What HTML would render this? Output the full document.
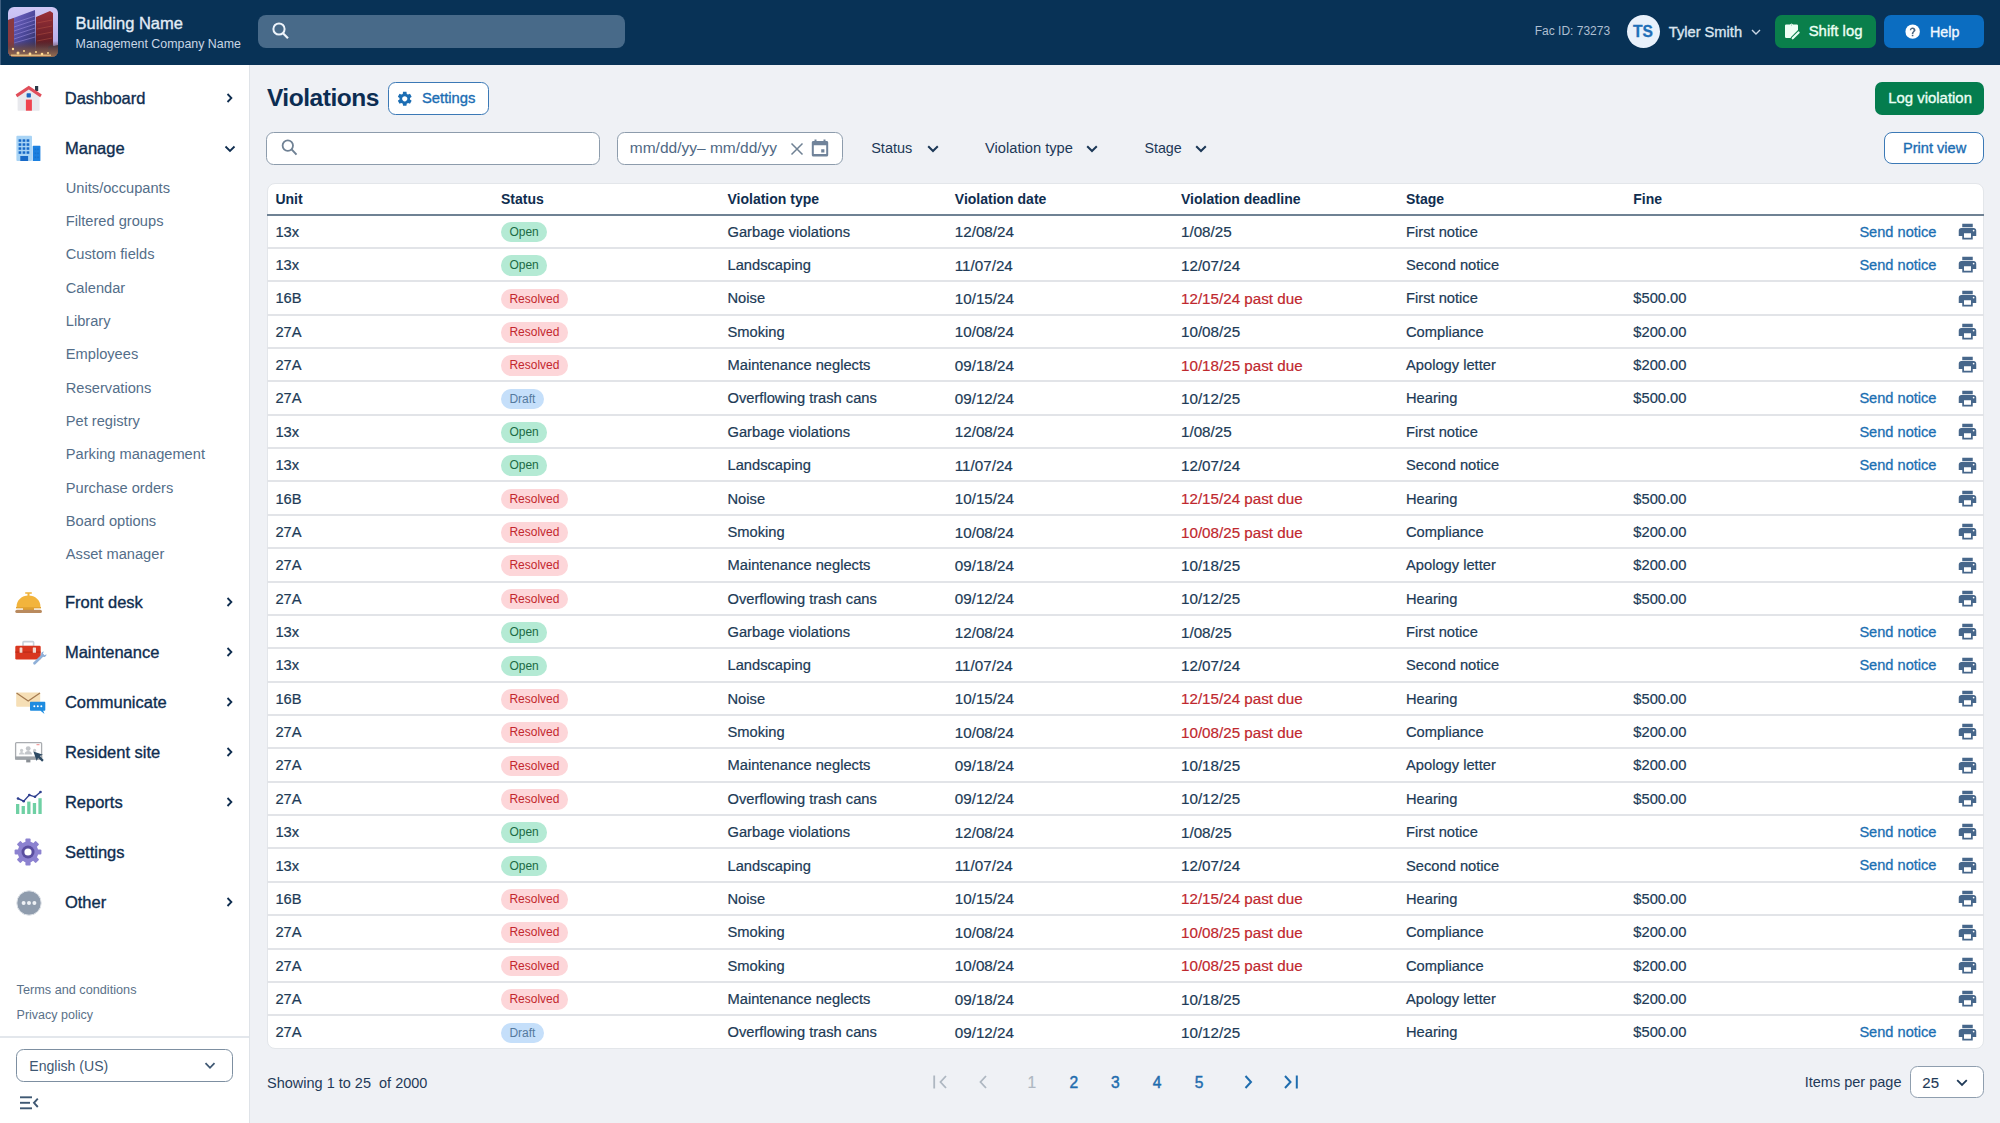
<!DOCTYPE html>
<html><head><meta charset="utf-8"><title>Violations</title>
<style>
*{box-sizing:border-box;margin:0;padding:0}
html,body{width:2000px;height:1123px;overflow:hidden}
body{background:#eff1f5;font-family:"Liberation Sans",sans-serif;position:relative;color:#1d3857}
.a{position:absolute;line-height:1;white-space:nowrap}
.med{-webkit-text-stroke:0.35px currentColor}
svg{position:absolute;display:block;overflow:visible}
#hdr{position:absolute;left:0;top:0;width:2000px;height:65px;background:#083256}
#hdr .edge{position:absolute;left:0;top:0;width:1px;height:65px;background:#3f5f80}
#logo{position:absolute;left:8px;top:7px;width:50px;height:50px;border-radius:6px;overflow:hidden}
#hsearch{position:absolute;left:258px;top:15px;width:367px;height:33px;border-radius:8px;background:#486a89}
.hbtn{position:absolute;top:15px;height:33px;border-radius:7px}
#side{position:absolute;left:0;top:65px;width:250px;height:1058px;background:#fff;border-right:1px solid #dfe3e8}
.nav{font-size:16.5px;color:#0f2d4f}
.sub{font-size:14.65px;color:#546e89}
.btn-out{position:absolute;background:#fff;border:1.5px solid #3b79b6;border-radius:7.5px}
.inp{position:absolute;background:#fff;border:1.4px solid #8d9cac;border-radius:7.5px}
#tbl{position:absolute;left:267px;top:182.5px;width:1716.5px;height:866px;background:#fff;border-radius:8px;border:1px solid #e3e6ea}
.th{font-size:14px;font-weight:700;color:#0f2d4f}
#hline{position:absolute;left:267px;top:213.6px;width:1716.5px;height:2px;background:#6f8294}
.row{position:absolute;left:267px;width:1716.5px;height:33.36px;border-bottom:2px solid #e2e4e8}
.row:last-child{border-bottom:none}
.row .c{position:absolute;top:9.1px;font-size:14.7px;-webkit-text-stroke:0.2px currentColor;line-height:1;white-space:nowrap;color:#203a56}
.c1{left:8.4px}.c3{left:460.5px}.c4{left:687.8px}.c5{left:914px}.c6{left:1139px}.c7{left:1366.3px}
.row .c4,.row .c5{font-size:15.2px;top:8.7px}
.row .red{color:#bf282e}
.badge{position:absolute;left:234px;top:6.3px;height:20.6px;border-radius:10.3px;font-size:12px;line-height:21.4px;padding:0 8.4px;white-space:nowrap}
.b-open{background:#b4ead4;color:#1c6a45}
.b-res{background:#fdd6d9;color:#c3272e}
.b-draft{background:#c5dffa;color:#557a9e}
.send{position:absolute;left:1592.4px;top:9.0px;font-size:14.6px;line-height:1;color:#1b6fb2;white-space:nowrap;-webkit-text-stroke:0.3px currentColor}
.pr{left:1689.9px;top:5.4px;width:21px;height:21px;fill:#47678b}
.pg{font-size:15.6px;font-weight:400;color:#1f6dae;-webkit-text-stroke:0.45px currentColor}
</style></head><body>

<!-- HEADER -->
<div id="hdr">
  <div class="edge"></div>
  <div id="logo">
    <svg width="50" height="50" viewBox="0 0 50 50" style="left:0;top:0">
      <defs>
        <linearGradient id="sky" x1="0" y1="0" x2="0" y2="1"><stop offset="0" stop-color="#cfc8f6"/><stop offset="1" stop-color="#b0a6e6"/></linearGradient>
        <linearGradient id="b1" x1="0" y1="0" x2="1" y2="1"><stop offset="0" stop-color="#7a6ad0"/><stop offset=".55" stop-color="#4a4798"/><stop offset="1" stop-color="#2a2a50"/></linearGradient>
        <linearGradient id="b2" x1="0" y1="0" x2="0" y2="1"><stop offset="0" stop-color="#9a3038"/><stop offset=".6" stop-color="#6a2028"/><stop offset="1" stop-color="#3a1a20"/></linearGradient>
        <linearGradient id="gl" x1="0" y1="0" x2="0" y2="1"><stop offset="0" stop-color="#5a3a40" stop-opacity="0"/><stop offset=".45" stop-color="#6a4a48" stop-opacity=".8"/><stop offset="1" stop-color="#9a7050"/></linearGradient>
      </defs>
      <rect width="50" height="50" fill="url(#sky)"/>
      <polygon points="0,13 27,3 28,50 0,50" fill="url(#b1)"/>
      <g stroke="#a898e8" stroke-width=".9" opacity=".55">
        <line x1="6" y1="16" x2="27" y2="9"/><line x1="6" y1="20" x2="27" y2="13"/><line x1="6" y1="24" x2="27" y2="17"/>
        <line x1="6" y1="28" x2="27" y2="21"/><line x1="6" y1="32" x2="27" y2="25"/><line x1="6" y1="36" x2="27" y2="30"/>
      </g>
      <polygon points="0,13 6,11 6,50 0,50" fill="#8a3a40"/>
      <polygon points="28,10 42,4 45,6 45,50 28,50" fill="url(#b2)"/>
      <g stroke="#c05a48" stroke-width=".7" opacity=".6">
        <line x1="29" y1="16" x2="44" y2="13"/><line x1="29" y1="22" x2="44" y2="19"/><line x1="29" y1="28" x2="44" y2="25"/><line x1="29" y1="34" x2="44" y2="31"/>
      </g>
      <path d="M40 50V40l3-2 3 1 4-1v12z" fill="#2a2a3a"/>
      <rect x="0" y="34" width="50" height="16" fill="url(#gl)"/>
      <g fill="#ffd890"><circle cx="5" cy="42" r="1.2"/><circle cx="10" cy="46" r="1.5"/><circle cx="16" cy="44" r="1"/><circle cx="22" cy="47" r="1.4"/><circle cx="28" cy="45" r="1"/><circle cx="34" cy="47" r="1.3"/><circle cx="40" cy="46" r="1"/><rect x="3" y="47.5" width="40" height="1.5" opacity=".7"/></g>
    </svg>
  </div>
  <div class="a med" style="left:75.6px;top:14.6px;font-size:16.5px;color:#e3ecf6">Building Name</div>
  <div class="a" style="left:75.6px;top:37.9px;font-size:12.4px;color:#c8d6e5">Management Company Name</div>
  <div id="hsearch"></div>
  <svg width="24" height="24" style="left:270px;top:19px" viewBox="0 0 24 24"><circle cx="9" cy="10" r="5.6" fill="none" stroke="#eef4fb" stroke-width="2"/><line x1="13" y1="14.2" x2="18" y2="19.2" stroke="#eef4fb" stroke-width="2.2"/></svg>

  <div class="a" style="left:1534.75px;top:25.4px;font-size:12px;color:#aebfd1">Fac ID: 73273</div>
  <div style="position:absolute;left:1627px;top:15px;width:33px;height:33px;border-radius:50%;background:#e9f1fb"></div>
  <div class="a" style="left:1633px;top:23.7px;font-size:15.6px;font-weight:700;color:#1f6fb8;-webkit-text-stroke:0.3px currentColor">TS</div>
  <div class="a med" style="left:1668.75px;top:24.5px;font-size:14.66px;color:#dbe5ef">Tyler Smith</div>
  <svg width="10" height="6" style="left:1750.5px;top:28.8px" viewBox="0 0 10 6"><polyline points="1,1 5,5 9,1" fill="none" stroke="#c9d6e4" stroke-width="1.4"/></svg>

  <div class="hbtn" style="left:1775px;width:101px;background:#0a7f4b"></div>
  <svg width="16" height="16" style="left:1784px;top:23px" viewBox="0 0 16 16">
    <path d="M1 2.6Q1 1.4 2.2 1.4H5.9L7.5 0.6 9.1 1.4H12.8Q14 1.4 14 2.6V7L6.8 14.2V15H2.2Q1 15 1 13.8Z" fill="#effff6"/>
    <path d="M7.2 1.6l.3 1.6.3-1.6z" fill="#0a7f4b"/>
    <path d="M8.7 15.3l5.9-5.8" stroke="#e6fff4" stroke-width="2.2" stroke-linecap="round"/>
  </svg>
  <div class="a med" style="left:1808.7px;top:24.1px;font-size:14.9px;color:#ecfff4">Shift log</div>

  <div class="hbtn" style="left:1884.3px;width:99.7px;background:#0b6dc1"></div>
  <svg width="17.3" height="17.3" style="left:1904.4px;top:22.9px" viewBox="0 0 24 24"><circle cx="12" cy="12" r="10" fill="#fff"/><g transform="translate(12 12.6) scale(.85) translate(-12 -12)"><path fill="#4a6580" d="M13.2 19h-2.6v-2.5h2.6zm2.07-7.75l-.9.92C13.65 12.9 13.2 13.5 13.2 15h-2.6v-.5c0-1.1.45-2.1 1.17-2.83l1.24-1.26c.37-.36.59-.86.59-1.41 0-1.1-.9-2-2-2s-2 .9-2 2H7.4c0-2.5 2.1-4.5 4.6-4.5s4.6 2 4.6 4.5c0 .88-.36 1.68-.93 2.25z"/></g></svg>
  <div class="a med" style="left:1930px;top:24.6px;font-size:14.3px;color:#f2f8ff">Help</div>
</div>

<!-- SIDEBAR -->
<div id="side"></div>
<!-- Dashboard icon: house -->
<svg width="28" height="28" style="left:15px;top:84px" viewBox="0 0 28 28">
  <rect x="20" y="2" width="3.2" height="5" fill="#2b3a48"/>
  <path d="M2.6 12L13.8 4.6 24.6 12v14.1c0 .4-.3.6-.6.6H3.2c-.4 0-.6-.2-.6-.6z" fill="#e8e9ed"/>
  <path d="M.6 10.6L13.8 1.8l13 8.8-1.6 2.6L13.8 5.6 2.2 13.2z" fill="#e04e5a"/>
  <rect x="11.6" y="9.2" width="4.3" height="4.2" rx=".7" fill="#1a66c0"/>
  <rect x="10.9" y="15.6" width="6" height="11.1" fill="#f0444f"/>
</svg>
<div class="a nav med" style="left:64.75px;top:89.5px">Dashboard</div>
<svg width="8" height="10" style="left:226.2px;top:93.2px" viewBox="0 0 8 10"><polyline points="1.5,1 5.4,5 1.5,9" fill="none" stroke="#0f2d4f" stroke-width="1.8"/></svg>

<!-- Manage icon: building -->
<svg width="28" height="28" style="left:15px;top:134px" viewBox="0 0 28 28">
  <rect x="1.4" y="1.7" width="15.6" height="25.3" rx="1" fill="#a9d4f5"/>
  <g fill="#1769c7"><rect x="3.6" y="5.3" width="2.7" height="2.5"/><rect x="7.6" y="5.3" width="2.7" height="2.5"/><rect x="11.6" y="5.3" width="2.7" height="2.5"/><rect x="3.6" y="9.3" width="2.7" height="2.5"/><rect x="7.6" y="9.3" width="2.7" height="2.5"/><rect x="11.6" y="9.3" width="2.7" height="2.5"/><rect x="3.6" y="13.3" width="2.7" height="2.5"/><rect x="7.6" y="13.3" width="2.7" height="2.5"/><rect x="11.6" y="13.3" width="2.7" height="2.5"/><rect x="3.6" y="17.3" width="2.7" height="2.5"/><rect x="7.6" y="17.3" width="2.7" height="2.5"/><rect x="11.6" y="17.3" width="2.7" height="2.5"/><rect x="5.3" y="22" width="7.8" height="5"/></g>
  <rect x="17.7" y="11.8" width="7.7" height="15.2" rx=".6" fill="#1b80e0"/><g fill="#1466c0" opacity=".5"><rect x="19.6" y="14.5" width="1.6" height="1.6"/><rect x="22.2" y="14.5" width="1.6" height="1.6"/><rect x="19.6" y="18.5" width="1.6" height="1.6"/><rect x="22.2" y="18.5" width="1.6" height="1.6"/><rect x="19.6" y="22.5" width="1.6" height="1.6"/><rect x="22.2" y="22.5" width="1.6" height="1.6"/></g>
</svg>
<div class="a nav med" style="left:65px;top:139.5px">Manage</div>
<svg width="12" height="8" style="left:224px;top:144.5px" viewBox="0 0 12 8"><polyline points="1.5,1.5 6,6 10.5,1.5" fill="none" stroke="#0f2d4f" stroke-width="1.8"/></svg>

<div class="a sub" style="left:65.8px;top:180.60px">Units/occupants</div>
<div class="a sub" style="left:65.8px;top:213.95px">Filtered groups</div>
<div class="a sub" style="left:65.8px;top:247.30px">Custom fields</div>
<div class="a sub" style="left:65.8px;top:280.65px">Calendar</div>
<div class="a sub" style="left:65.8px;top:314.00px">Library</div>
<div class="a sub" style="left:65.8px;top:347.35px">Employees</div>
<div class="a sub" style="left:65.8px;top:380.70px">Reservations</div>
<div class="a sub" style="left:65.8px;top:414.05px">Pet registry</div>
<div class="a sub" style="left:65.8px;top:447.40px">Parking management</div>
<div class="a sub" style="left:65.8px;top:480.75px">Purchase orders</div>
<div class="a sub" style="left:65.8px;top:514.10px">Board options</div>
<div class="a sub" style="left:65.8px;top:547.45px">Asset manager</div>

<!-- Front desk: bell -->
<svg width="28" height="24" style="left:15px;top:590px" viewBox="0 0 28 24">
  <rect x="10" y="2.2" width="7" height="1.6" rx=".8" fill="#f0b23a"/>
  <rect x="12.5" y="3" width="2" height="3" fill="#f0b23a"/>
  <path d="M1.5 17.2c0-7 5.3-11.6 12-11.6s12 4.6 12 11.6z" fill="#f2b43c"/>
  <rect x="1" y="17" width="25" height="1.4" fill="#e3a432"/>
  <rect x="8" y="18" width="11" height="2" fill="#e0a030"/>
  <rect x="0.3" y="19.8" width="26.6" height="3.2" rx="1.6" fill="#b98a5e"/>
</svg>
<div class="a nav med" style="left:64.9px;top:593.6px">Front desk</div>
<svg width="8" height="10" style="left:226.2px;top:597.4px" viewBox="0 0 8 10"><polyline points="1.5,1 5.4,5 1.5,9" fill="none" stroke="#0f2d4f" stroke-width="1.8"/></svg>

<!-- Maintenance: toolbox -->
<svg width="34" height="26" style="left:14px;top:640px" viewBox="0 0 34 26">
  <rect x="9" y="1.6" width="10.6" height="5" rx=".8" fill="none" stroke="#c8d0da" stroke-width="1.6"/>
  <rect x="1.3" y="5.8" width="25.4" height="13.6" rx="1.2" fill="#d9361f"/>
  <rect x="1.3" y="11.6" width="25.4" height="1" fill="#b82a18"/>
  <rect x="5.6" y="7.6" width="2.8" height="5.2" rx=".4" fill="#f3d9d0"/>
  <rect x="18.8" y="7.6" width="3.2" height="5.2" rx=".4" fill="#f3d9d0"/>
  <path d="M20.5 23.3l8-7.8" stroke="#8fb0d8" stroke-width="2.6" stroke-linecap="round"/>
  <path d="M27 14.5c0-1.6 1.3-2.9 2.9-2.9l-1 2 1.6 1.6 2-1c0 1.6-1.3 2.9-2.9 2.9z" fill="#8fb0d8"/>
</svg>
<div class="a nav med" style="left:64.9px;top:643.7px">Maintenance</div>
<svg width="8" height="10" style="left:226.2px;top:647.4px" viewBox="0 0 8 10"><polyline points="1.5,1 5.4,5 1.5,9" fill="none" stroke="#0f2d4f" stroke-width="1.8"/></svg>

<!-- Communicate: envelope + chat -->
<svg width="32" height="26" style="left:15px;top:690px" viewBox="0 0 32 26">
  <rect x="1.2" y="2.5" width="24" height="14.2" rx="1" fill="#f6dfb6"/>
  <polyline points="1.5,3 13.2,11 25,3" fill="none" stroke="#a47a50" stroke-width="1.3"/>
  <path d="M16 11.8h13.3c.6 0 1 .4 1 1v6.9c0 .6-.4 1-1 1h-1.2l1.4 3.2-4-3.2H16c-.6 0-1-.4-1-1v-6.9c0-.6.4-1 1-1z" fill="#1e8ce0"/>
  <circle cx="19.3" cy="16.3" r="1" fill="#fff"/><circle cx="22.8" cy="16.3" r="1" fill="#fff"/><circle cx="26.3" cy="16.3" r="1" fill="#fff"/>
</svg>
<div class="a nav med" style="left:64.9px;top:693.6px">Communicate</div>
<svg width="8" height="10" style="left:226.2px;top:697.4px" viewBox="0 0 8 10"><polyline points="1.5,1 5.4,5 1.5,9" fill="none" stroke="#0f2d4f" stroke-width="1.8"/></svg>

<!-- Resident site: monitor -->
<svg width="32" height="24" style="left:14px;top:741px" viewBox="0 0 32 24">
  <rect x="1.6" y="1.6" width="26" height="16.4" rx="1" fill="#fff" stroke="#a9acb0" stroke-width="1.3"/>
  <rect x="1" y="15.4" width="27.2" height="3.2" fill="#9ea3a8"/>
  <rect x="12.2" y="18.4" width="4.2" height="3" fill="#8a8f95"/>
  <circle cx="14.2" cy="7.6" r="2.4" fill="#c2c5c9"/><path d="M10.4 13.6c0-2.4 1.6-3.6 3.8-3.6s3.8 1.2 3.8 3.6z" fill="#c2c5c9"/>
  <circle cx="7.6" cy="9.4" r="1.6" fill="#c9cccf"/><path d="M5 13.6c0-1.6 1.1-2.6 2.6-2.6s2.6 1 2.6 2.6z" fill="#c9cccf"/>
  <circle cx="20.6" cy="9.4" r="1.6" fill="#c9cccf"/>
  <rect x="22.5" y="3.2" width="3" height="1" fill="#e88"/>
  <path d="M19.4 10.6l9.6 3.2-3.3 1.3 4 4-1.6 1.6-4-4-1.4 3.4z" fill="#2d4a63"/>
</svg>
<div class="a nav med" style="left:64.9px;top:743.6px">Resident site</div>
<svg width="8" height="10" style="left:226.2px;top:747.4px" viewBox="0 0 8 10"><polyline points="1.5,1 5.4,5 1.5,9" fill="none" stroke="#0f2d4f" stroke-width="1.8"/></svg>

<!-- Reports: chart -->
<svg width="30" height="26" style="left:14px;top:790px" viewBox="0 0 30 26">
  <g fill="#6fd0a4">
   <rect x="2" y="14" width="3.3" height="10"/><rect x="7.6" y="16" width="3.3" height="8"/>
   <rect x="13.2" y="11.6" width="3.3" height="12.4"/><rect x="18.8" y="13" width="3.3" height="11"/>
   <rect x="24.4" y="8.2" width="3.3" height="15.8"/>
  </g>
  <polyline points="4,8.5 9.7,11.2 15.3,5 21,6.8 26.5,2" fill="none" stroke="#2e3f8f" stroke-width="1.4"/>
  <g fill="#2e3f8f"><circle cx="4" cy="8.5" r="1.3"/><circle cx="9.7" cy="11.2" r="1.3"/><circle cx="15.3" cy="5" r="1.3"/><circle cx="21" cy="6.8" r="1.3"/><circle cx="26.5" cy="2" r="1.3"/></g>
</svg>
<div class="a nav med" style="left:64.9px;top:793.6px">Reports</div>
<svg width="8" height="10" style="left:226.2px;top:797.4px" viewBox="0 0 8 10"><polyline points="1.5,1 5.4,5 1.5,9" fill="none" stroke="#0f2d4f" stroke-width="1.8"/></svg>

<!-- Settings: gear -->
<svg width="28" height="28" style="left:14.1px;top:838px" viewBox="0 0 28 28">
  <g fill="#8c82d0"><rect x="11.4" y="0.6" width="5.2" height="6" rx="1" transform="rotate(0 14 14)"/><rect x="11.4" y="0.6" width="5.2" height="6" rx="1" transform="rotate(45 14 14)"/><rect x="11.4" y="0.6" width="5.2" height="6" rx="1" transform="rotate(90 14 14)"/><rect x="11.4" y="0.6" width="5.2" height="6" rx="1" transform="rotate(135 14 14)"/><rect x="11.4" y="0.6" width="5.2" height="6" rx="1" transform="rotate(180 14 14)"/><rect x="11.4" y="0.6" width="5.2" height="6" rx="1" transform="rotate(225 14 14)"/><rect x="11.4" y="0.6" width="5.2" height="6" rx="1" transform="rotate(270 14 14)"/><rect x="11.4" y="0.6" width="5.2" height="6" rx="1" transform="rotate(315 14 14)"/><circle cx="14" cy="14" r="10.4"/></g>
  <circle cx="14" cy="14" r="6.5" fill="#5a4fa0"/>
  <circle cx="14" cy="14" r="3.6" fill="#fff"/>
</svg>
<div class="a nav med" style="left:64.9px;top:843.6px">Settings</div>

<!-- Other -->
<svg width="26" height="26" style="left:16px;top:889.5px" viewBox="0 0 26 26">
  <circle cx="13" cy="13" r="12.2" fill="#8f9cad" stroke="#dfe3e8" stroke-width="1"/>
  <circle cx="7.6" cy="13" r="2" fill="#eef1f5"/><circle cx="13" cy="13" r="2" fill="#eef1f5"/><circle cx="18.4" cy="13" r="2" fill="#eef1f5"/>
</svg>
<div class="a nav med" style="left:64.9px;top:893.6px">Other</div>
<svg width="8" height="10" style="left:226.2px;top:897.4px" viewBox="0 0 8 10"><polyline points="1.5,1 5.4,5 1.5,9" fill="none" stroke="#0f2d4f" stroke-width="1.8"/></svg>

<div class="a" style="left:16.6px;top:984.1px;font-size:12.7px;color:#5a7189">Terms and conditions</div>
<div class="a" style="left:16.6px;top:1009px;font-size:12.5px;color:#5a7189">Privacy policy</div>
<div style="position:absolute;left:0;top:1036px;width:249px;height:1.6px;background:#e3e7ec"></div>
<div class="inp" style="left:16.3px;top:1049px;width:216.4px;height:33px;border-color:#7d8fa1;border-width:1.3px"></div>
<div class="a" style="left:29.3px;top:1058.9px;font-size:14.07px;color:#3f5873">English (US)</div>
<svg width="12" height="8" style="left:204px;top:1061.8px" viewBox="0 0 12 8"><polyline points="1.5,1.2 6,5.8 10.5,1.2" fill="none" stroke="#3f5873" stroke-width="1.8"/></svg>
<svg width="20" height="14" style="left:18.5px;top:1096px" viewBox="0 0 20 14">
  <g stroke="#3f5873" stroke-width="1.9" fill="none"><line x1="1" y1="1.3" x2="13" y2="1.3"/><line x1="1" y1="6.8" x2="11" y2="6.8"/><line x1="1" y1="12.3" x2="13" y2="12.3"/><polyline points="18.8,2.6 15,6.8 18.8,11"/></g>
</svg>


<!-- MAIN -->
<div class="a" style="left:266.9px;top:85.76px;font-size:24.5px;letter-spacing:-0.45px;font-weight:700;color:#0c2d52">Violations</div>
<div class="btn-out" style="left:388px;top:82px;width:100.5px;height:32.5px"></div>
<svg width="17.5" height="17.5" style="left:396.3px;top:89.5px" viewBox="0 0 24 24"><path fill="#1b6db3" d="M19.14 12.94c.04-.3.06-.61.06-.94 0-.32-.02-.64-.07-.94l2.03-1.58c.18-.14.23-.41.12-.61l-1.92-3.32c-.12-.22-.37-.29-.59-.22l-2.39.96c-.5-.38-1.03-.7-1.62-.94l-.36-2.54c-.04-.24-.24-.41-.48-.41h-3.84c-.24 0-.43.17-.47.41l-.36 2.54c-.59.24-1.13.57-1.62.94l-2.39-.96c-.22-.08-.47 0-.59.22L2.74 8.87c-.12.21-.08.47.12.61l2.03 1.58c-.05.3-.09.63-.09.94s.02.64.07.94l-2.03 1.58c-.18.14-.23.41-.12.61l1.92 3.32c.12.22.37.29.59.22l2.39-.96c.5.38 1.03.7 1.62.94l.36 2.54c.05.24.24.41.48.41h3.84c.24 0 .44-.17.47-.41l.36-2.54c.59-.24 1.13-.56 1.62-.94l2.39.96c.22.08.47 0 .59-.22l1.92-3.32c.12-.22.07-.47-.12-.61l-2.01-1.58zM12 15.6c-1.98 0-3.6-1.62-3.6-3.6s1.62-3.6 3.6-3.6 3.6 1.62 3.6 3.6-1.62 3.6-3.6 3.6z"/></svg>
<div class="a med" style="left:422px;top:91px;font-size:14.8px;color:#1b6db3">Settings</div>

<div style="position:absolute;left:1875px;top:81.7px;width:109.2px;height:33.1px;border-radius:7px;background:#047d4e"></div>
<div class="a med" style="left:1888.3px;top:91px;font-size:14.9px;color:#eafff4">Log violation</div>

<div class="inp" style="left:266.3px;top:132px;width:333.4px;height:32.5px"></div>
<svg width="20" height="20" style="left:279px;top:137px" viewBox="0 0 20 20"><circle cx="8.8" cy="8.6" r="5.2" fill="none" stroke="#6f8194" stroke-width="1.8"/><line x1="12.6" y1="12.4" x2="17.5" y2="17.6" stroke="#6f8194" stroke-width="2"/></svg>

<div class="inp" style="left:617px;top:131.8px;width:225.8px;height:32.8px"></div>
<div class="a" style="left:629.8px;top:140.23px;font-size:15.5px;color:#4f6884">mm/dd/yy– mm/dd/yy</div>
<svg width="14" height="14" style="left:790px;top:141.5px" viewBox="0 0 14 14"><path d="M1.5 1.5L12.5 12.5M12.5 1.5L1.5 12.5" stroke="#6f8194" stroke-width="1.5"/></svg>
<svg width="18" height="18" style="left:811px;top:139px" viewBox="0 0 18 18"><path fill="#70839a" d="M3.5 0.5h2v1.6h7V0.5h2v1.6h1.2c.8 0 1.5.7 1.5 1.5v12.3c0 .8-.7 1.5-1.5 1.5H2.3c-.8 0-1.5-.7-1.5-1.5V3.6c0-.8.7-1.5 1.5-1.5h1.2zM2.8 6.2v8.8h12.4V6.2zM10.2 10.2h3.2v3.2h-3.2z"/></svg>

<div class="a" style="left:871.2px;top:141.1px;font-size:14.5px;color:#1c3857">Status</div>
<svg width="12" height="8" style="left:927px;top:145px" viewBox="0 0 12 8"><polyline points="1.2,1.2 6,6 10.8,1.2" fill="none" stroke="#1c3857" stroke-width="2"/></svg>
<div class="a" style="left:985px;top:141.1px;font-size:14.7px;color:#1c3857">Violation type</div>
<svg width="12" height="8" style="left:1086px;top:145px" viewBox="0 0 12 8"><polyline points="1.2,1.2 6,6 10.8,1.2" fill="none" stroke="#1c3857" stroke-width="2"/></svg>
<div class="a" style="left:1144.4px;top:141.1px;font-size:14.3px;color:#1c3857">Stage</div>
<svg width="12" height="8" style="left:1194.5px;top:145px" viewBox="0 0 12 8"><polyline points="1.2,1.2 6,6 10.8,1.2" fill="none" stroke="#1c3857" stroke-width="2"/></svg>

<div class="btn-out" style="left:1884.2px;top:131.8px;width:100px;height:32.7px;border-radius:8px"></div>
<div class="a med" style="left:1903px;top:141px;font-size:14.6px;color:#1b6db3">Print view</div>

<!-- TABLE -->
<div id="tbl"></div>
<div class="a th" style="left:275.4px;top:192.1px">Unit</div>
<div class="a th" style="left:501px;top:192.1px">Status</div>
<div class="a th" style="left:727.5px;top:192.1px">Violation type</div>
<div class="a th" style="left:954.8px;top:192.1px">Violation date</div>
<div class="a th" style="left:1181px;top:192.1px">Violation deadline</div>
<div class="a th" style="left:1406px;top:192.1px">Stage</div>
<div class="a th" style="left:1633.3px;top:192.1px">Fine</div>
<div id="hline"></div>
<div id="rows">
<div class="row" style="top:215.60px"><span class="c c1">13x</span><span class="badge b-open">Open</span><span class="c c3">Garbage violations</span><span class="c c4">12/08/24</span><span class="c c5">1/08/25</span><span class="c c6">First notice</span><span class="c c7"></span><span class="send">Send notice</span><svg class="pr" viewBox="0 0 24 24"><path d="M19 8H5c-1.66 0-3 1.34-3 3v6h4v4h12v-4h4v-6c0-1.66-1.34-3-3-3zm-3 11H8v-5h8v5zm3-7c-.55 0-1-.45-1-1s.45-1 1-1 1 .45 1 1-.45 1-1 1zm-1-9H6v4h12V3z"/></svg></div>
<div class="row" style="top:248.96px"><span class="c c1">13x</span><span class="badge b-open">Open</span><span class="c c3">Landscaping</span><span class="c c4">11/07/24</span><span class="c c5">12/07/24</span><span class="c c6">Second notice</span><span class="c c7"></span><span class="send">Send notice</span><svg class="pr" viewBox="0 0 24 24"><path d="M19 8H5c-1.66 0-3 1.34-3 3v6h4v4h12v-4h4v-6c0-1.66-1.34-3-3-3zm-3 11H8v-5h8v5zm3-7c-.55 0-1-.45-1-1s.45-1 1-1 1 .45 1 1-.45 1-1 1zm-1-9H6v4h12V3z"/></svg></div>
<div class="row" style="top:282.32px"><span class="c c1">16B</span><span class="badge b-res">Resolved</span><span class="c c3">Noise</span><span class="c c4">10/15/24</span><span class="c c5 red">12/15/24 past due</span><span class="c c6">First notice</span><span class="c c7">$500.00</span><svg class="pr" viewBox="0 0 24 24"><path d="M19 8H5c-1.66 0-3 1.34-3 3v6h4v4h12v-4h4v-6c0-1.66-1.34-3-3-3zm-3 11H8v-5h8v5zm3-7c-.55 0-1-.45-1-1s.45-1 1-1 1 .45 1 1-.45 1-1 1zm-1-9H6v4h12V3z"/></svg></div>
<div class="row" style="top:315.68px"><span class="c c1">27A</span><span class="badge b-res">Resolved</span><span class="c c3">Smoking</span><span class="c c4">10/08/24</span><span class="c c5">10/08/25</span><span class="c c6">Compliance</span><span class="c c7">$200.00</span><svg class="pr" viewBox="0 0 24 24"><path d="M19 8H5c-1.66 0-3 1.34-3 3v6h4v4h12v-4h4v-6c0-1.66-1.34-3-3-3zm-3 11H8v-5h8v5zm3-7c-.55 0-1-.45-1-1s.45-1 1-1 1 .45 1 1-.45 1-1 1zm-1-9H6v4h12V3z"/></svg></div>
<div class="row" style="top:349.04px"><span class="c c1">27A</span><span class="badge b-res">Resolved</span><span class="c c3">Maintenance neglects</span><span class="c c4">09/18/24</span><span class="c c5 red">10/18/25 past due</span><span class="c c6">Apology letter</span><span class="c c7">$200.00</span><svg class="pr" viewBox="0 0 24 24"><path d="M19 8H5c-1.66 0-3 1.34-3 3v6h4v4h12v-4h4v-6c0-1.66-1.34-3-3-3zm-3 11H8v-5h8v5zm3-7c-.55 0-1-.45-1-1s.45-1 1-1 1 .45 1 1-.45 1-1 1zm-1-9H6v4h12V3z"/></svg></div>
<div class="row" style="top:382.40px"><span class="c c1">27A</span><span class="badge b-draft">Draft</span><span class="c c3">Overflowing trash cans</span><span class="c c4">09/12/24</span><span class="c c5">10/12/25</span><span class="c c6">Hearing</span><span class="c c7">$500.00</span><span class="send">Send notice</span><svg class="pr" viewBox="0 0 24 24"><path d="M19 8H5c-1.66 0-3 1.34-3 3v6h4v4h12v-4h4v-6c0-1.66-1.34-3-3-3zm-3 11H8v-5h8v5zm3-7c-.55 0-1-.45-1-1s.45-1 1-1 1 .45 1 1-.45 1-1 1zm-1-9H6v4h12V3z"/></svg></div>
<div class="row" style="top:415.76px"><span class="c c1">13x</span><span class="badge b-open">Open</span><span class="c c3">Garbage violations</span><span class="c c4">12/08/24</span><span class="c c5">1/08/25</span><span class="c c6">First notice</span><span class="c c7"></span><span class="send">Send notice</span><svg class="pr" viewBox="0 0 24 24"><path d="M19 8H5c-1.66 0-3 1.34-3 3v6h4v4h12v-4h4v-6c0-1.66-1.34-3-3-3zm-3 11H8v-5h8v5zm3-7c-.55 0-1-.45-1-1s.45-1 1-1 1 .45 1 1-.45 1-1 1zm-1-9H6v4h12V3z"/></svg></div>
<div class="row" style="top:449.12px"><span class="c c1">13x</span><span class="badge b-open">Open</span><span class="c c3">Landscaping</span><span class="c c4">11/07/24</span><span class="c c5">12/07/24</span><span class="c c6">Second notice</span><span class="c c7"></span><span class="send">Send notice</span><svg class="pr" viewBox="0 0 24 24"><path d="M19 8H5c-1.66 0-3 1.34-3 3v6h4v4h12v-4h4v-6c0-1.66-1.34-3-3-3zm-3 11H8v-5h8v5zm3-7c-.55 0-1-.45-1-1s.45-1 1-1 1 .45 1 1-.45 1-1 1zm-1-9H6v4h12V3z"/></svg></div>
<div class="row" style="top:482.48px"><span class="c c1">16B</span><span class="badge b-res">Resolved</span><span class="c c3">Noise</span><span class="c c4">10/15/24</span><span class="c c5 red">12/15/24 past due</span><span class="c c6">Hearing</span><span class="c c7">$500.00</span><svg class="pr" viewBox="0 0 24 24"><path d="M19 8H5c-1.66 0-3 1.34-3 3v6h4v4h12v-4h4v-6c0-1.66-1.34-3-3-3zm-3 11H8v-5h8v5zm3-7c-.55 0-1-.45-1-1s.45-1 1-1 1 .45 1 1-.45 1-1 1zm-1-9H6v4h12V3z"/></svg></div>
<div class="row" style="top:515.84px"><span class="c c1">27A</span><span class="badge b-res">Resolved</span><span class="c c3">Smoking</span><span class="c c4">10/08/24</span><span class="c c5 red">10/08/25 past due</span><span class="c c6">Compliance</span><span class="c c7">$200.00</span><svg class="pr" viewBox="0 0 24 24"><path d="M19 8H5c-1.66 0-3 1.34-3 3v6h4v4h12v-4h4v-6c0-1.66-1.34-3-3-3zm-3 11H8v-5h8v5zm3-7c-.55 0-1-.45-1-1s.45-1 1-1 1 .45 1 1-.45 1-1 1zm-1-9H6v4h12V3z"/></svg></div>
<div class="row" style="top:549.20px"><span class="c c1">27A</span><span class="badge b-res">Resolved</span><span class="c c3">Maintenance neglects</span><span class="c c4">09/18/24</span><span class="c c5">10/18/25</span><span class="c c6">Apology letter</span><span class="c c7">$200.00</span><svg class="pr" viewBox="0 0 24 24"><path d="M19 8H5c-1.66 0-3 1.34-3 3v6h4v4h12v-4h4v-6c0-1.66-1.34-3-3-3zm-3 11H8v-5h8v5zm3-7c-.55 0-1-.45-1-1s.45-1 1-1 1 .45 1 1-.45 1-1 1zm-1-9H6v4h12V3z"/></svg></div>
<div class="row" style="top:582.56px"><span class="c c1">27A</span><span class="badge b-res">Resolved</span><span class="c c3">Overflowing trash cans</span><span class="c c4">09/12/24</span><span class="c c5">10/12/25</span><span class="c c6">Hearing</span><span class="c c7">$500.00</span><svg class="pr" viewBox="0 0 24 24"><path d="M19 8H5c-1.66 0-3 1.34-3 3v6h4v4h12v-4h4v-6c0-1.66-1.34-3-3-3zm-3 11H8v-5h8v5zm3-7c-.55 0-1-.45-1-1s.45-1 1-1 1 .45 1 1-.45 1-1 1zm-1-9H6v4h12V3z"/></svg></div>
<div class="row" style="top:615.92px"><span class="c c1">13x</span><span class="badge b-open">Open</span><span class="c c3">Garbage violations</span><span class="c c4">12/08/24</span><span class="c c5">1/08/25</span><span class="c c6">First notice</span><span class="c c7"></span><span class="send">Send notice</span><svg class="pr" viewBox="0 0 24 24"><path d="M19 8H5c-1.66 0-3 1.34-3 3v6h4v4h12v-4h4v-6c0-1.66-1.34-3-3-3zm-3 11H8v-5h8v5zm3-7c-.55 0-1-.45-1-1s.45-1 1-1 1 .45 1 1-.45 1-1 1zm-1-9H6v4h12V3z"/></svg></div>
<div class="row" style="top:649.28px"><span class="c c1">13x</span><span class="badge b-open">Open</span><span class="c c3">Landscaping</span><span class="c c4">11/07/24</span><span class="c c5">12/07/24</span><span class="c c6">Second notice</span><span class="c c7"></span><span class="send">Send notice</span><svg class="pr" viewBox="0 0 24 24"><path d="M19 8H5c-1.66 0-3 1.34-3 3v6h4v4h12v-4h4v-6c0-1.66-1.34-3-3-3zm-3 11H8v-5h8v5zm3-7c-.55 0-1-.45-1-1s.45-1 1-1 1 .45 1 1-.45 1-1 1zm-1-9H6v4h12V3z"/></svg></div>
<div class="row" style="top:682.64px"><span class="c c1">16B</span><span class="badge b-res">Resolved</span><span class="c c3">Noise</span><span class="c c4">10/15/24</span><span class="c c5 red">12/15/24 past due</span><span class="c c6">Hearing</span><span class="c c7">$500.00</span><svg class="pr" viewBox="0 0 24 24"><path d="M19 8H5c-1.66 0-3 1.34-3 3v6h4v4h12v-4h4v-6c0-1.66-1.34-3-3-3zm-3 11H8v-5h8v5zm3-7c-.55 0-1-.45-1-1s.45-1 1-1 1 .45 1 1-.45 1-1 1zm-1-9H6v4h12V3z"/></svg></div>
<div class="row" style="top:716.00px"><span class="c c1">27A</span><span class="badge b-res">Resolved</span><span class="c c3">Smoking</span><span class="c c4">10/08/24</span><span class="c c5 red">10/08/25 past due</span><span class="c c6">Compliance</span><span class="c c7">$200.00</span><svg class="pr" viewBox="0 0 24 24"><path d="M19 8H5c-1.66 0-3 1.34-3 3v6h4v4h12v-4h4v-6c0-1.66-1.34-3-3-3zm-3 11H8v-5h8v5zm3-7c-.55 0-1-.45-1-1s.45-1 1-1 1 .45 1 1-.45 1-1 1zm-1-9H6v4h12V3z"/></svg></div>
<div class="row" style="top:749.36px"><span class="c c1">27A</span><span class="badge b-res">Resolved</span><span class="c c3">Maintenance neglects</span><span class="c c4">09/18/24</span><span class="c c5">10/18/25</span><span class="c c6">Apology letter</span><span class="c c7">$200.00</span><svg class="pr" viewBox="0 0 24 24"><path d="M19 8H5c-1.66 0-3 1.34-3 3v6h4v4h12v-4h4v-6c0-1.66-1.34-3-3-3zm-3 11H8v-5h8v5zm3-7c-.55 0-1-.45-1-1s.45-1 1-1 1 .45 1 1-.45 1-1 1zm-1-9H6v4h12V3z"/></svg></div>
<div class="row" style="top:782.72px"><span class="c c1">27A</span><span class="badge b-res">Resolved</span><span class="c c3">Overflowing trash cans</span><span class="c c4">09/12/24</span><span class="c c5">10/12/25</span><span class="c c6">Hearing</span><span class="c c7">$500.00</span><svg class="pr" viewBox="0 0 24 24"><path d="M19 8H5c-1.66 0-3 1.34-3 3v6h4v4h12v-4h4v-6c0-1.66-1.34-3-3-3zm-3 11H8v-5h8v5zm3-7c-.55 0-1-.45-1-1s.45-1 1-1 1 .45 1 1-.45 1-1 1zm-1-9H6v4h12V3z"/></svg></div>
<div class="row" style="top:816.08px"><span class="c c1">13x</span><span class="badge b-open">Open</span><span class="c c3">Garbage violations</span><span class="c c4">12/08/24</span><span class="c c5">1/08/25</span><span class="c c6">First notice</span><span class="c c7"></span><span class="send">Send notice</span><svg class="pr" viewBox="0 0 24 24"><path d="M19 8H5c-1.66 0-3 1.34-3 3v6h4v4h12v-4h4v-6c0-1.66-1.34-3-3-3zm-3 11H8v-5h8v5zm3-7c-.55 0-1-.45-1-1s.45-1 1-1 1 .45 1 1-.45 1-1 1zm-1-9H6v4h12V3z"/></svg></div>
<div class="row" style="top:849.44px"><span class="c c1">13x</span><span class="badge b-open">Open</span><span class="c c3">Landscaping</span><span class="c c4">11/07/24</span><span class="c c5">12/07/24</span><span class="c c6">Second notice</span><span class="c c7"></span><span class="send">Send notice</span><svg class="pr" viewBox="0 0 24 24"><path d="M19 8H5c-1.66 0-3 1.34-3 3v6h4v4h12v-4h4v-6c0-1.66-1.34-3-3-3zm-3 11H8v-5h8v5zm3-7c-.55 0-1-.45-1-1s.45-1 1-1 1 .45 1 1-.45 1-1 1zm-1-9H6v4h12V3z"/></svg></div>
<div class="row" style="top:882.80px"><span class="c c1">16B</span><span class="badge b-res">Resolved</span><span class="c c3">Noise</span><span class="c c4">10/15/24</span><span class="c c5 red">12/15/24 past due</span><span class="c c6">Hearing</span><span class="c c7">$500.00</span><svg class="pr" viewBox="0 0 24 24"><path d="M19 8H5c-1.66 0-3 1.34-3 3v6h4v4h12v-4h4v-6c0-1.66-1.34-3-3-3zm-3 11H8v-5h8v5zm3-7c-.55 0-1-.45-1-1s.45-1 1-1 1 .45 1 1-.45 1-1 1zm-1-9H6v4h12V3z"/></svg></div>
<div class="row" style="top:916.16px"><span class="c c1">27A</span><span class="badge b-res">Resolved</span><span class="c c3">Smoking</span><span class="c c4">10/08/24</span><span class="c c5 red">10/08/25 past due</span><span class="c c6">Compliance</span><span class="c c7">$200.00</span><svg class="pr" viewBox="0 0 24 24"><path d="M19 8H5c-1.66 0-3 1.34-3 3v6h4v4h12v-4h4v-6c0-1.66-1.34-3-3-3zm-3 11H8v-5h8v5zm3-7c-.55 0-1-.45-1-1s.45-1 1-1 1 .45 1 1-.45 1-1 1zm-1-9H6v4h12V3z"/></svg></div>
<div class="row" style="top:949.52px"><span class="c c1">27A</span><span class="badge b-res">Resolved</span><span class="c c3">Smoking</span><span class="c c4">10/08/24</span><span class="c c5 red">10/08/25 past due</span><span class="c c6">Compliance</span><span class="c c7">$200.00</span><svg class="pr" viewBox="0 0 24 24"><path d="M19 8H5c-1.66 0-3 1.34-3 3v6h4v4h12v-4h4v-6c0-1.66-1.34-3-3-3zm-3 11H8v-5h8v5zm3-7c-.55 0-1-.45-1-1s.45-1 1-1 1 .45 1 1-.45 1-1 1zm-1-9H6v4h12V3z"/></svg></div>
<div class="row" style="top:982.88px"><span class="c c1">27A</span><span class="badge b-res">Resolved</span><span class="c c3">Maintenance neglects</span><span class="c c4">09/18/24</span><span class="c c5">10/18/25</span><span class="c c6">Apology letter</span><span class="c c7">$200.00</span><svg class="pr" viewBox="0 0 24 24"><path d="M19 8H5c-1.66 0-3 1.34-3 3v6h4v4h12v-4h4v-6c0-1.66-1.34-3-3-3zm-3 11H8v-5h8v5zm3-7c-.55 0-1-.45-1-1s.45-1 1-1 1 .45 1 1-.45 1-1 1zm-1-9H6v4h12V3z"/></svg></div>
<div class="row" style="top:1016.24px"><span class="c c1">27A</span><span class="badge b-draft">Draft</span><span class="c c3">Overflowing trash cans</span><span class="c c4">09/12/24</span><span class="c c5">10/12/25</span><span class="c c6">Hearing</span><span class="c c7">$500.00</span><span class="send">Send notice</span><svg class="pr" viewBox="0 0 24 24"><path d="M19 8H5c-1.66 0-3 1.34-3 3v6h4v4h12v-4h4v-6c0-1.66-1.34-3-3-3zm-3 11H8v-5h8v5zm3-7c-.55 0-1-.45-1-1s.45-1 1-1 1 .45 1 1-.45 1-1 1zm-1-9H6v4h12V3z"/></svg></div>
</div>

<!-- FOOTER -->
<div class="a" style="left:267px;top:1075.7px;font-size:14.5px;color:#1f3a58">Showing 1 to 25&nbsp; of 2000</div>
<svg width="16" height="14" style="left:932px;top:1075.2px" viewBox="0 0 16 14"><g fill="none" stroke="#aeb7c1" stroke-width="1.8"><line x1="2.2" y1="0.5" x2="2.2" y2="13.5"/><polyline points="14,1 8.5,7 14,13"/></g></svg>
<svg width="12" height="14" style="left:975.5px;top:1075.2px" viewBox="0 0 12 14"><polyline points="10,1 4.5,7 10,13" fill="none" stroke="#aeb7c1" stroke-width="1.8"/></svg>
<div class="a pg" style="left:1027.5px;top:1075.1px;color:#aeb7c1;-webkit-text-stroke:0.2px currentColor">1</div>
<div class="a pg" style="left:1069.5px;top:1075.1px">2</div>
<div class="a pg" style="left:1111px;top:1075.1px">3</div>
<div class="a pg" style="left:1152.7px;top:1075.1px">4</div>
<div class="a pg" style="left:1194.8px;top:1075.1px">5</div>
<svg width="12" height="14" style="left:1243px;top:1075.2px" viewBox="0 0 12 14"><polyline points="2.5,1 8,7 2.5,13" fill="none" stroke="#1f6dae" stroke-width="2"/></svg>
<svg width="16" height="14" style="left:1282.5px;top:1075.2px" viewBox="0 0 16 14"><g fill="none" stroke="#1f6dae" stroke-width="2"><polyline points="2,1 7.5,7 2,13"/><line x1="13.8" y1="0.5" x2="13.8" y2="13.5"/></g></svg>

<div class="a" style="left:1804.75px;top:1075.1px;font-size:14.5px;color:#1f3a58">Items per page</div>
<div class="inp" style="left:1909.5px;top:1066px;width:74.5px;height:32.4px;border-color:#8f9eae"></div>
<div class="a" style="left:1922.3px;top:1075.1px;font-size:15px;color:#1f3a58;-webkit-text-stroke:0.15px currentColor">25</div>
<svg width="12" height="8" style="left:1955.5px;top:1079px" viewBox="0 0 12 8"><polyline points="1.2,1.2 6,6 10.8,1.2" fill="none" stroke="#1f3a58" stroke-width="1.8"/></svg>
</body></html>
